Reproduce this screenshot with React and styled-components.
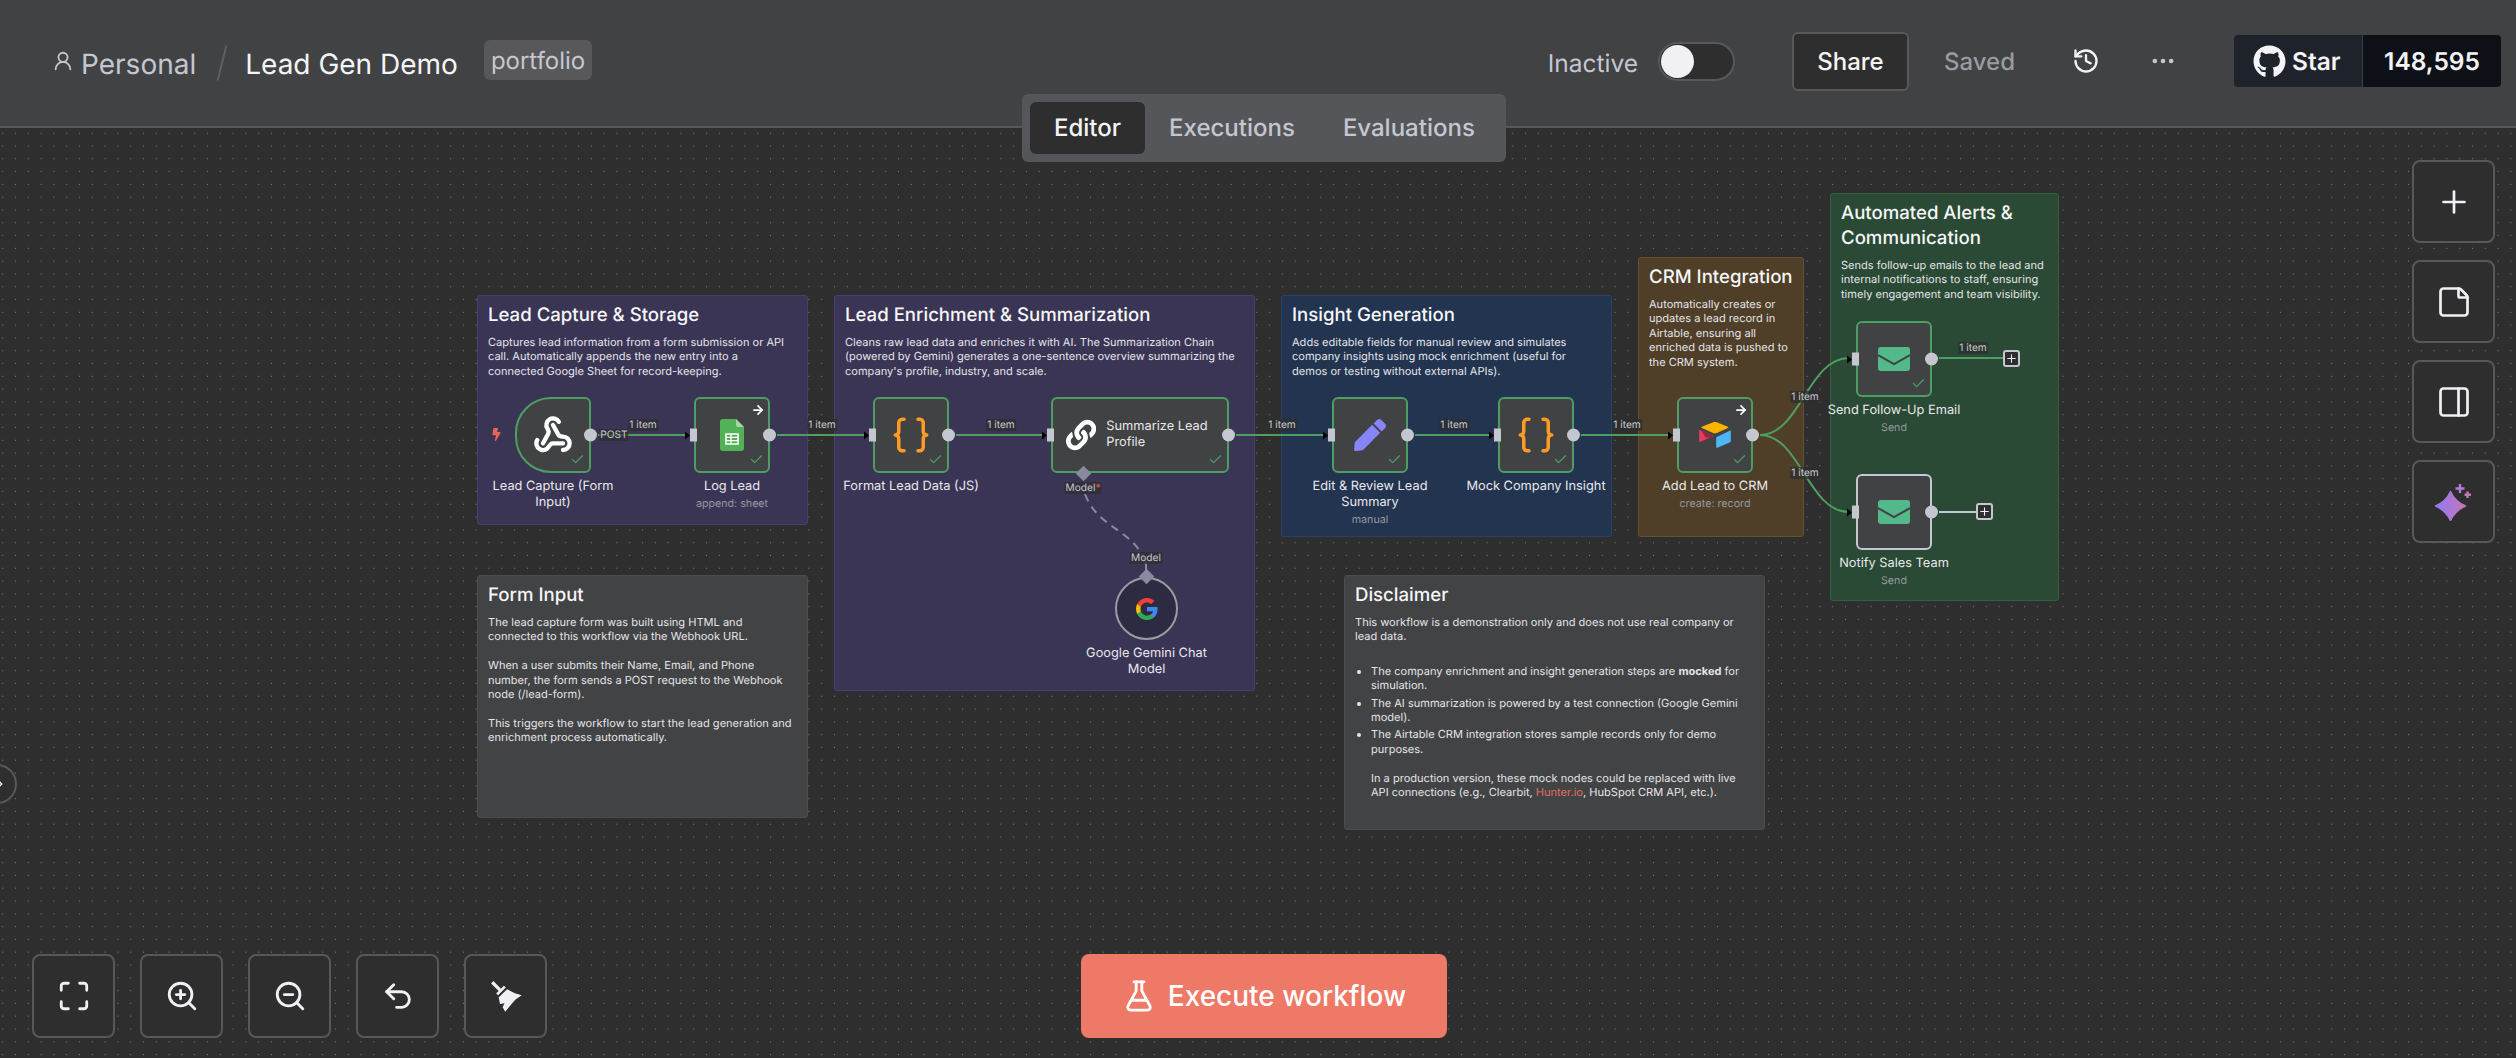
import styled, { createGlobalStyle } from 'styled-components';
import {
  UserRound, History, Ellipsis, Plus, StickyNote, PanelRight, Maximize, ZoomIn, ZoomOut,
  Undo2, FlaskConical, Webhook, Braces, ArrowRight, Check, ChevronRight,
} from 'lucide-react';
import { FaGithub, FaLink, FaPen, FaBolt } from 'react-icons/fa';

const GREEN = '#4d9e63';

const GlobalStyle = createGlobalStyle`
  html, body { margin: 0; padding: 0; background: #2e2e2e; }
  body { font-family: Inter, "Noto Sans", sans-serif; text-rendering: geometricPrecision; }
  * { box-sizing: border-box; }
`;

const Page = styled.div`
  position: relative;
  display: flex;
  flex-direction: column;
  width: 100vw;
  height: 100vh;
  overflow: hidden;
`;

const Header = styled.header`
  display: flex;
  align-items: center;
  height: 128px;
  padding: 0 15px 4px 52px;
  background: #414244;
  border-bottom: 2px solid #58585a;
  flex-shrink: 0;
`;

const Crumbs = styled.div`
  display: flex;
  align-items: center;
`;

const Crumb = styled.span`
  margin-left: 7px;
  padding-top: 5px;
  font-size: 28px;
  color: #c4c7d0;
`;

const Slash = styled.span`
  width: 2px;
  height: 36px;
  margin: 3px 22px 0 25px;
  background: #5f5f63;
  transform: rotate(14deg);
`;

const Title = styled.span`
  padding-top: 5px;
  font-size: 28px;
  color: #f4f4f6;
`;

const Tag = styled.span`
  display: flex;
  align-items: center;
  height: 40px;
  margin: -2px 0 0 26px;
  padding: 0 7px;
  border-radius: 6px;
  background: #58585a;
  font-size: 24px;
  color: #c4c7d0;
`;

const Actions = styled.div`
  display: flex;
  align-items: center;
  margin-left: auto;
`;

const StateLabel = styled.span`
  margin-right: 20px;
  padding-top: 3px;
  font-size: 24.5px;
  color: #c4c7d0;
`;

const Toggle = styled.span`
  display: flex;
  align-items: center;
  width: 77px;
  height: 39px;
  padding-left: 1px;
  border: 2px solid #58585a;
  border-radius: 20px;
  background: #2e2e2e;
`;

const Knob = styled.span`
  width: 33px;
  height: 33px;
  border-radius: 50%;
  background: #f0f0f5;
`;

const ShareButton = styled.button`
  width: 117px;
  height: 59px;
  margin-left: 57px;
  border: 2px solid #58585a;
  border-radius: 6px;
  background: #2e2e2e;
  font: 500 24px Inter, sans-serif;
  color: #f4f4f6;
`;

const Saved = styled.span`
  margin-left: 35px;
  font-size: 24px;
  font-weight: 500;
  color: #9a9aa3;
`;

const IconSlot = styled.span`
  display: flex;
  margin-left: ${(p) => p.$gap}px;
  color: ${(p) => p.$color};
`;

const StarBox = styled.div`
  display: flex;
  height: 52px;
  margin-left: 57px;
  border-radius: 4px;
  overflow: hidden;
  font-size: 24.5px;
  font-weight: 600;
  color: #f4f4f6;
`;

const StarPart = styled.span`
  display: flex;
  align-items: center;
  gap: 6px;
  width: 129px;
  padding-left: 19px;
  background: #1e222b;
  border-right: 1px solid #3a3f48;
`;

const CountPart = styled.span`
  display: flex;
  align-items: center;
  justify-content: center;
  width: 138px;
  background: #0d1117;
`;

const Tabs = styled.nav`
  position: absolute;
  z-index: 3;
  top: 94px;
  left: 1022px;
  display: flex;
  align-items: center;
  width: 484px;
  height: 68px;
  padding: 0 8px;
  border-radius: 6px;
  background: #555659;
`;

const Tab = styled.span`
  display: flex;
  align-items: center;
  justify-content: center;
  height: 52px;
  padding: 0 24px 2px;
  border-radius: 6px;
  background: ${(p) => (p.$active ? '#2e2e2e' : 'transparent')};
  font-size: 24px;
  font-weight: 500;
  color: ${(p) => (p.$active ? '#f4f4f6' : '#c4c7d0')};
`;

const Canvas = styled.main`
  position: relative;
  flex: 1;
  background-color: #2e2e2e;
  background-image: radial-gradient(circle, #787878 0.75px, transparent 1px);
  background-size: 12.8px 12.8px;
  background-position: -3.7px -1.2px;
`;

/* diagram uses page coordinates, canvas starts under the 128px header */
const Diagram = styled.div`
  position: absolute;
  top: -128px;
  left: 0;
  width: 2516px;
  height: 1058px;
`;

const Sticky = styled.section`
  position: absolute;
  left: ${(p) => p.$x}px;
  top: ${(p) => p.$y}px;
  width: ${(p) => p.$w}px;
  height: ${(p) => p.$h}px;
  padding: 7px 12px 7px 10px;
  border: 1px solid ${(p) => p.$border};
  border-radius: 3px;
  background: ${(p) => p.$bg};
  color: #e4e4e8;
  font-size: 11.05px;
  line-height: 14.4px;
`;

const StickyTitle = styled.h3`
  margin: 0 -10px 7px 0;
  font-size: 18.6px;
  font-weight: 500;
  line-height: 25px;
  color: #f6f6f8;
`;

const StickyText = styled.p`
  margin: 0 0 14.4px;
`;

const BulletList = styled.ul`
  margin: 20px 0 0;
  padding: 0 0 0 16px;

  li { margin-bottom: 3px; }
  p { margin: 14.4px 0 0; }
  strong { font-weight: 700; }
  a { color: #e0705f; text-decoration: none; }
`;

const EdgeLayer = styled.svg`
  position: absolute;
  inset: 0;
`;

const NodeBox = styled.div`
  position: absolute;
  left: ${(p) => p.$x}px;
  top: ${(p) => p.$y}px;
  width: ${(p) => p.$w}px;
  height: ${(p) => p.$h}px;
  display: flex;
  align-items: center;
  justify-content: ${(p) => (p.$wide ? 'flex-start' : 'center')};
  gap: 10px;
  padding-left: ${(p) => (p.$wide ? 13 : 0)}px;
  border: 2px solid ${(p) => p.$border};
  border-radius: ${(p) => p.$radius};
  background: ${(p) => p.$bg};
  color: #fff;
`;

const InlineName = styled.span`
  font-size: 12.8px;
  line-height: 16px;
  color: #e8e8ec;
`;

const NodeCaption = styled.div`
  position: absolute;
  top: calc(100% + 7.5px);
  left: 50%;
  width: max-content;
  max-width: 146px;
  transform: translateX(-50%);
  text-align: center;
  font-size: 12.8px;
  line-height: 16px;
  color: #e8e8ec;
`;

const NodeSub = styled.div`
  margin-top: 2.5px;
  font-size: 10.7px;
  line-height: 14px;
  color: #96969e;
`;

const Done = styled(Check)`
  position: absolute;
  right: 4px;
  bottom: 4px;
  color: ${GREEN};
`;

const Pinned = styled(ArrowRight)`
  position: absolute;
  top: 4px;
  right: 3px;
  color: #fff;
`;

const OutHandle = styled.span`
  position: absolute;
  top: 50%;
  right: -8px;
  width: 13px;
  height: 13px;
  border-radius: 50%;
  background: #c4c7d0;
  transform: translateY(-50%);
`;

const InHandle = styled.span`
  position: absolute;
  top: 50%;
  left: -6px;
  width: 7px;
  height: 13px;
  background: #c4c7d0;
  transform: translateY(-50%);

  &::before {
    content: '';
    position: absolute;
    top: 2.5px;
    left: -5px;
    border-top: 4px solid transparent;
    border-bottom: 4px solid transparent;
    border-left: 5px solid #000;
  }
`;

const Diamond = styled.span`
  position: absolute;
  z-index: 2;
  left: ${(p) => p.$x - 5.5}px;
  top: ${(p) => p.$y - 5.5}px;
  width: 11px;
  height: 11px;
  background: #8a8a9e;
  transform: rotate(45deg);
`;

const EdgeTag = styled.span`
  position: absolute;
  z-index: 2;
  left: ${(p) => p.$x}px;
  top: ${(p) => p.$y}px;
  padding: 0 1px;
  transform: translate(-50%, -50%);
  background: rgba(46, 46, 46, 0.72);
  font-size: 10.2px;
  line-height: 12px;
  color: #c4c7d0;
  white-space: nowrap;

  b { color: #e0605a; font-weight: 400; }
`;

const AddButton = styled.span`
  position: absolute;
  left: ${(p) => p.$x}px;
  top: ${(p) => p.$y}px;
  display: flex;
  align-items: center;
  justify-content: center;
  width: 17px;
  height: 17px;
  border: 2px solid #c4c7d0;
  border-radius: 3px;
  background: #2e2e2e;
  color: #f0f0f5;
`;

const TriggerBolt = styled(FaBolt)`
  position: absolute;
  left: 490px;
  top: 428px;
  color: #e0665a;
`;

const ToolButton = styled.button`
  display: flex;
  align-items: center;
  justify-content: center;
  width: 83px;
  height: ${(p) => p.$h || 83}px;
  padding: 0;
  border: 2px solid #58585a;
  border-radius: 8px;
  background: #2e2e2e;
  color: #f0f0f5;
`;

const SideTools = styled.div`
  position: absolute;
  top: 32px;
  right: 21px;
  display: flex;
  flex-direction: column;
  gap: 17px;
`;

const BottomTools = styled.div`
  position: absolute;
  left: 32px;
  bottom: 20px;
  display: flex;
  gap: 25px;
`;

const RunButton = styled.button`
  position: absolute;
  left: 1081px;
  bottom: 20px;
  display: flex;
  align-items: center;
  justify-content: center;
  gap: 12px;
  width: 366px;
  height: 84px;
  border: 0;
  border-radius: 8px;
  background: #ee7966;
  font: 500 28px Inter, sans-serif;
  color: #fff;
`;

const Expander = styled.span`
  position: absolute;
  top: 636px;
  left: -23px;
  display: flex;
  align-items: center;
  justify-content: flex-end;
  width: 40px;
  height: 40px;
  padding-right: 8px;
  border: 2px solid #58585a;
  border-radius: 50%;
  background: #2e2e2e;
  color: #f0f0f5;
`;

const SheetIcon = () => (
  <svg width="24" height="32" viewBox="0 0 24 32">
    <path d="M3 0h13l8 8v21a3 3 0 0 1-3 3H3a3 3 0 0 1-3-3V3a3 3 0 0 1 3-3z" fill="#53b257" />
    <path d="M16 0l8 8h-6a2 2 0 0 1-2-2z" fill="#a5d6a7" />
    <path d="M6 15h12v10H6z" fill="none" stroke="#fff" strokeWidth="1.6" />
    <path d="M6 18.4h12M6 21.7h12M11 15v10" stroke="#fff" strokeWidth="1.3" />
  </svg>
);

const AirtableIcon = () => (
  <svg width="32" height="26" viewBox="117 336 95 78">
    <path d="M159 337a12 12 0 0 1 11 0l33 13c2 1 2 3 0 4l-33 15a12 12 0 0 1-11 0l-34-15c-2-1-2-3 0-4z" fill="#fcb400" />
    <path d="M171 380l38-18c1-1 3 0 3 2v30c0 1-1 2-2 3l-38 16c-2 1-4 0-4-2v-28c0-1 1-2 3-3z" fill="#4eb6f5" />
    <path d="M117 362c0-2 2-3 3-2l41 18-44 19z" fill="#e8395f" />
    <path d="M122 361l38 17-10 5-14-1z" fill="#96263f" />
  </svg>
);

const MailIcon = () => (
  <svg width="32" height="24" viewBox="0 0 32 24">
    <rect width="32" height="24" rx="3" fill="#53b98a" />
    <path d="M0 8l16 9 16-9" fill="none" stroke="#414244" strokeWidth="2" />
  </svg>
);

const GoogleIcon = () => (
  <svg width="24" height="24" viewBox="0 0 24 24">
    <path d="M22.56 12.25c0-.78-.07-1.53-.2-2.25H12v4.26h5.92c-.26 1.37-1.04 2.53-2.21 3.31v2.77h3.57c2.08-1.92 3.28-4.74 3.28-8.09z" fill="#4285f4" />
    <path d="M12 23c2.97 0 5.46-.98 7.28-2.66l-3.57-2.77c-.98.66-2.23 1.06-3.71 1.06-2.86 0-5.29-1.93-6.16-4.53H2.18v2.84C3.99 20.53 7.7 23 12 23z" fill="#34a853" />
    <path d="M5.84 14.09c-.22-.66-.35-1.36-.35-2.09s.13-1.43.35-2.09V7.07H2.18C1.43 8.55 1 10.22 1 12s.43 3.45 1.18 4.93l2.85-2.22.81-.62z" fill="#fbbc05" />
    <path d="M12 5.38c1.62 0 3.06.56 4.21 1.64l3.15-3.15C17.45 2.09 14.97 1 12 1 7.7 1 3.99 3.47 2.18 7.07l3.66 2.84c.87-2.6 3.3-4.53 6.16-4.53z" fill="#ea4335" />
  </svg>
);

const BroomIcon = () => (
  <svg width="34" height="34" viewBox="85 85 105 105">
    <path d="M95 95l25 25" stroke="#f0f0f5" strokeWidth="10" />
    <path d="M107 130l24-24 6 5-24 24z" fill="#f0f0f5" />
    <path d="M115 141l26-24 24 12 21 6-20 14-31 37-8-14 6-12-14 2z" fill="#f0f0f5" />
  </svg>
);

const SparkleIcon = () => (
  <svg width="38" height="38" viewBox="0 0 38 38">
    <defs>
      <linearGradient id="sparkle" x1="0" y1="0" x2="1" y2="0">
        <stop offset="0" stopColor="#8f7bf5" />
        <stop offset="1" stopColor="#c774b8" />
      </linearGradient>
    </defs>
    <path
      d="M15.500 8.500Q20 18.500 30.500 23Q20 27.500 15.500 37.500Q11 27.500 0.500 23Q11 18.500 15.500 8.500z"
      fill="url(#sparkle)"
      stroke="url(#sparkle)"
      strokeWidth="1.500"
      strokeLinejoin="round"
    />
    <path d="M25 1v9M20.500 5.500h9" stroke="#b47ae0" strokeWidth="2.400" />
    <path d="M32.500 8.500v6.500M29.500 11.700h6.500" stroke="#c774b8" strokeWidth="2.400" />
  </svg>
);

const stickies = [
  {
    x: 477, y: 295, w: 331, h: 230, bg: '#3a3555', border: '#463f6e', title: 'Lead Capture & Storage',
    text: ['Captures lead information from a form submission or API call. Automatically appends the new entry into a connected Google Sheet for record-keeping.'],
  },
  {
    x: 834, y: 295, w: 421, h: 396, bg: '#3a3555', border: '#463f78', title: 'Lead Enrichment & Summarization',
    text: ["Cleans raw lead data and enriches it with AI. The Summarization Chain (powered by Gemini) generates a one-sentence overview summarizing the company's profile, industry, and scale."],
  },
  {
    x: 477, y: 575, w: 331, h: 243, bg: '#424345', border: '#4c4c50', title: 'Form Input',
    text: [
      'The lead capture form was built using HTML and connected to this workflow via the Webhook URL.',
      'When a user submits their Name, Email, and Phone number, the form sends a POST request to the Webhook node (/lead-form).',
      'This triggers the workflow to start the lead generation and enrichment process automatically.',
    ],
  },
  {
    x: 1281, y: 295, w: 331, h: 242, bg: '#22344f', border: '#2b4266', title: 'Insight Generation',
    text: ['Adds editable fields for manual review and simulates company insights using mock enrichment (useful for demos or testing without external APIs).'],
  },
  {
    x: 1638, y: 257, w: 166, h: 280, bg: '#4f3f28', border: '#66502f', title: 'CRM Integration',
    text: ['Automatically creates or updates a lead record in Airtable, ensuring all enriched data is pushed to the CRM system.'],
  },
  {
    x: 1830, y: 193, w: 229, h: 408, bg: '#2a4a35', border: '#33603f', title: 'Automated Alerts & Communication',
    text: ['Sends follow-up emails to the lead and internal notifications to staff, ensuring timely engagement and team visibility.'],
  },
];

const nodes = [
  { x: 515, y: 397, w: 76, name: 'Lead Capture (Form Input)', icon: <Webhook size={40} strokeWidth={2.6} />, radius: '36px 6px 6px 36px', noInput: true },
  { x: 694, y: 397, w: 76, name: 'Log Lead', sub: 'append: sheet', icon: <SheetIcon />, pinned: true },
  { x: 873, y: 397, w: 76, name: 'Format Lead Data (JS)', icon: <Braces size={42} color="#ff9b26" strokeWidth={2} /> },
  { x: 1051, y: 397, w: 178, wide: 'Summarize Lead Profile', icon: <FaLink size={36} /> },
  { x: 1332, y: 397, w: 76, name: 'Edit & Review Lead Summary', sub: 'manual', icon: <FaPen size={32} color="#8884fb" /> },
  { x: 1498, y: 397, w: 76, name: 'Mock Company Insight', icon: <Braces size={42} color="#ff9b26" strokeWidth={2} /> },
  { x: 1677, y: 397, w: 76, name: 'Add Lead to CRM', sub: 'create: record', icon: <AirtableIcon />, pinned: true },
  { x: 1856, y: 321, w: 76, name: 'Send Follow-Up Email', sub: 'Send', icon: <MailIcon /> },
  { x: 1856, y: 474, w: 76, name: 'Notify Sales Team', sub: 'Send', icon: <MailIcon />, idle: true },
];

const edgeTags = [
  [643, 425], [822, 425], [1001, 425], [1282, 425], [1454, 425], [1627, 425], [1805, 397], [1805, 473], [1973, 348],
];

const Node = ({ node }) => {
  const height = node.h || 76;
  return (
    <NodeBox
      $x={node.x}
      $y={node.y}
      $w={node.w}
      $h={height}
      $wide={!!node.wide}
      $border={node.idle ? '#c4c7d0' : GREEN}
      $bg="#414244"
      $radius={node.radius || '6px'}
    >
      {!node.noInput && <InHandle />}
      {node.icon}
      {node.wide && <InlineName>{node.wide}</InlineName>}
      {node.pinned && <Pinned size={14} strokeWidth={3} />}
      {!node.idle && <Done size={15} strokeWidth={2} />}
      <OutHandle />
      {node.name && (
        <NodeCaption>
          {node.name}
          {node.sub && <NodeSub>{node.sub}</NodeSub>}
        </NodeCaption>
      )}
    </NodeBox>
  );
};

const App = () => (
  <Page>
    <GlobalStyle />
    <Header>
      <Crumbs>
        <UserRound size={22} color="#c4c7d0" />
        <Crumb>Personal</Crumb>
        <Slash />
        <Title>Lead Gen Demo</Title>
        <Tag>portfolio</Tag>
      </Crumbs>
      <Actions>
        <StateLabel>Inactive</StateLabel>
        <Toggle><Knob /></Toggle>
        <ShareButton>Share</ShareButton>
        <Saved>Saved</Saved>
        <IconSlot $gap={57} $color="#f4f4f6"><History size={28} strokeWidth={2} /></IconSlot>
        <IconSlot $gap={49} $color="#c4c7d0"><Ellipsis size={28} strokeWidth={2} /></IconSlot>
        <StarBox>
          <StarPart><FaGithub size={33} />Star</StarPart>
          <CountPart>148,595</CountPart>
        </StarBox>
      </Actions>
    </Header>
    <Tabs>
      <Tab $active>Editor</Tab>
      <Tab>Executions</Tab>
      <Tab>Evaluations</Tab>
    </Tabs>
    <Canvas>
      <Diagram>
        {stickies.map((note) => (
          <Sticky key={note.title} $x={note.x} $y={note.y} $w={note.w} $h={note.h} $bg={note.bg} $border={note.border}>
            <StickyTitle>{note.title}</StickyTitle>
            {note.text.map((line) => <StickyText key={line}>{line}</StickyText>)}
          </Sticky>
        ))}
        <Sticky $x={1344} $y={575} $w={421} $h={255} $bg="#424345" $border="#4c4c50">
          <StickyTitle>Disclaimer</StickyTitle>
          <StickyText>This workflow is a demonstration only and does not use real company or lead data.</StickyText>
          <BulletList>
            <li>The company enrichment and insight generation steps are <strong>mocked</strong> for simulation.</li>
            <li>The AI summarization is powered by a test connection (Google Gemini model).</li>
            <li>
              The Airtable CRM integration stores sample records only for demo purposes.
              <p>In a production version, these mock nodes could be replaced with live API connections (e.g., Clearbit, <a href="#hunter">Hunter.io</a>, HubSpot CRM API, etc.).</p>
            </li>
          </BulletList>
        </Sticky>

        <EdgeLayer width="2516" height="1058" fill="none">
          <g stroke={GREEN} strokeWidth="2">
            <path d="M598 435H688" />
            <path d="M777 435H867" />
            <path d="M956 435H1045" />
            <path d="M1236 435H1326" />
            <path d="M1415 435H1492" />
            <path d="M1581 435H1671" />
            <path d="M1760 435C1800 435 1808 358 1849 358" />
            <path d="M1760 435C1800 435 1808 512 1849 512" />
            <path d="M1939 358H2003" />
          </g>
          <path d="M1939 512H1976" stroke="#c4c7d0" strokeWidth="2" />
          <path d="M1085 494C1098 530 1138 530 1146 566" stroke="#8a8a9e" strokeWidth="2" strokeDasharray="8 6" />
          <path d="M1146 562V572" stroke="#8a8a9e" strokeWidth="2" />
        </EdgeLayer>

        <TriggerBolt size={13} />
        {nodes.map((node) => <Node key={node.x + '-' + node.y} node={node} />)}
        <NodeBox $x={1115} $y={577} $w={63} $h={63} $border="#9b9ba3" $bg="#2d2b42" $radius="50%">
          <GoogleIcon />
          <NodeCaption>Google Gemini Chat Model</NodeCaption>
        </NodeBox>

        <Diamond $x={1083} $y={473} />
        <Diamond $x={1146} $y={576} />
        <EdgeTag $x={614} $y={435}>POST</EdgeTag>
        {edgeTags.map(([x, y]) => <EdgeTag key={x + '-' + y} $x={x} $y={y}>1 item</EdgeTag>)}
        <EdgeTag $x={1083} $y={488}>Model<b>*</b></EdgeTag>
        <EdgeTag $x={1146} $y={558}>Model</EdgeTag>
        <AddButton $x={2003} $y={350}><Plus size={13} strokeWidth={2} /></AddButton>
        <AddButton $x={1976} $y={503}><Plus size={13} strokeWidth={2} /></AddButton>
      </Diagram>

      <SideTools>
        <ToolButton><Plus size={36} strokeWidth={1.8} /></ToolButton>
        <ToolButton><StickyNote size={36} strokeWidth={1.8} /></ToolButton>
        <ToolButton><PanelRight size={36} strokeWidth={1.8} /></ToolButton>
        <ToolButton><SparkleIcon /></ToolButton>
      </SideTools>
      <BottomTools>
        <ToolButton $h={84}><Maximize size={34} strokeWidth={2} /></ToolButton>
        <ToolButton $h={84}><ZoomIn size={34} strokeWidth={2} /></ToolButton>
        <ToolButton $h={84}><ZoomOut size={34} strokeWidth={2} /></ToolButton>
        <ToolButton $h={84}><Undo2 size={34} strokeWidth={2} /></ToolButton>
        <ToolButton $h={84}><BroomIcon /></ToolButton>
      </BottomTools>
      <RunButton><FlaskConical size={34} strokeWidth={2} />Execute workflow</RunButton>
      <Expander><ChevronRight size={14} strokeWidth={2.5} /></Expander>
    </Canvas>
  </Page>
);

export default App;
